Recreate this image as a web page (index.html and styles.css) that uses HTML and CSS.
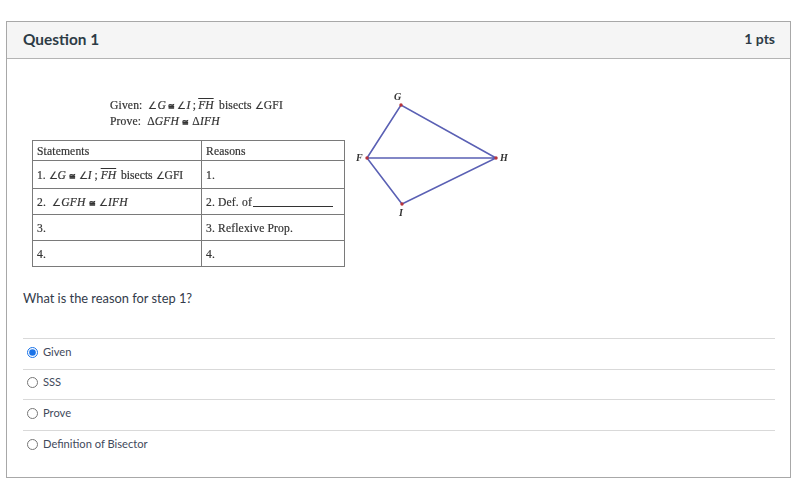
FILE: index.html
```html
<!DOCTYPE html>
<html lang="en">
<head>
<meta charset="utf-8">
<title>Question 1</title>
<link rel="stylesheet" href="styles.css">
</head>
<body>
<section class="card">
  <header class="card-head">
    <h2 class="title">Question 1</h2>
    <span class="pts">1 pts</span>
  </header>
  <div class="card-body">
    <div class="figure">
      <div class="proof">
        <div class="given">
          <div class="given-row"><span class="given-label">Given:</span><span class="given-claim"><i><span class="ang">∠</span>G</i> <b class="cong">≅</b> <i><span class="ang">∠</span>I</i> ; <i class="over">FH</i> <span class="given-tail">bisects <span class="ang">∠</span>GFI</span></span></div>
          <div class="given-row"><span class="given-label">Prove:</span><span>Δ<i>GFH</i> <b class="cong">≅</b> Δ<i>IFH</i></span></div>
        </div>
        <table class="proof-table">
          <tr class="r-head"><td class="col-a">Statements</td><td>Reasons</td></tr>
          <tr class="r-1"><td class="tight">1. <i><span class="ang">∠</span>G</i> <b class="cong">≅</b> <i><span class="ang">∠</span>I</i> ; <i class="over">FH</i> <span class="tail">bisects <span class="ang">∠</span>GFI</span></td><td>1.</td></tr>
          <tr class="r-2"><td>2. &nbsp;<i><span class="ang">∠</span>GFH</i> <b class="cong">≅</b> <i><span class="ang">∠</span>IFH</i></td><td>2. Def. of<span class="blank"></span></td></tr>
          <tr class="r-3"><td>3.</td><td>3. Reflexive Prop.</td></tr>
          <tr class="r-4"><td>4.</td><td>4.</td></tr>
        </table>
      </div>
      <svg class="diagram" width="170" height="140" viewBox="0 0 170 140" aria-label="Kite diagram FGHI">
        <path class="edges" d="M17 73 L51 20 L146 73 L52 119 Z M17 73 H146"/>
        <g class="dots">
          <circle cx="17" cy="73" r="1.7"/><circle cx="51" cy="20" r="1.7"/><circle cx="146" cy="73" r="1.7"/><circle cx="52" cy="119" r="1.7"/>
        </g>
        <g class="labels">
          <text x="44" y="15">G</text>
          <text x="6" y="76">F</text>
          <text x="150" y="76">H</text>
          <text x="49" y="131">I</text>
        </g>
      </svg>
    </div>
    <p class="prompt">What is the reason for step 1?</p>
    <ul class="answers">
      <li class="answer"><input type="radio" name="q1" class="radio" checked><span class="answer-text">Given</span></li>
      <li class="answer"><input type="radio" name="q1" class="radio"><span class="answer-text">SSS</span></li>
      <li class="answer"><input type="radio" name="q1" class="radio"><span class="answer-text">Prove</span></li>
      <li class="answer"><input type="radio" name="q1" class="radio"><span class="answer-text">Definition of Bisector</span></li>
    </ul>
  </div>
</section>
</body>
</html>
```
FILE: styles.css
```css
* { box-sizing: border-box; }
html, body { margin: 0; background: #fff; }
body { padding: 21px 11px 0 6px; font-family: Lato, "Open Sans", sans-serif; color: #2d3b45; }
.card { width: 785px; height: 457px; border: 1px solid #a8a8a8; }
.card-head { height: 37px; display: flex; align-items: center; justify-content: space-between; padding: 0 15px 2px 16px; background: #f5f5f5; border-bottom: 1px solid #b4b4b4; }
.title { margin: 0; font-size: 15.4px; font-weight: 700; color: #2d3b45; }
.pts { margin-bottom: 2px; font-size: 14px; font-weight: 700; }
.card-body { padding: 0 15px 0 16px; }
.figure { display: flex; height: 221px; padding: 9px 0 0 0; }
.proof { width: 322px; padding: 31px 0 0 9px; font-family: "Liberation Serif", serif; font-size: 11.6px; letter-spacing: 0.15px; color: #333; -webkit-text-stroke: 0.2px #333; filter: blur(0.35px); }
.given { height: 29px; padding-left: 78px; line-height: 14.5px; }
.given-row { display: flex; gap: 6px; white-space: nowrap; }
.given-label { display: inline-block; }
.given-claim { letter-spacing: 0; word-spacing: -0.6px; }
.given-tail { margin-left: 3px; letter-spacing: 0.15px; word-spacing: 0; }
.tight { letter-spacing: 0; }
.ang { font-size: 9.5px; font-style: normal; }
.over { text-decoration: overline; }
.tail { margin-left: 2px; }
.cong { font-size: 8px; }
.proof-table { width: 313px; height: 126px; margin-top: 12px; border-collapse: collapse; table-layout: fixed; }
.proof-table td { border: 1px solid #7a7a7a; padding: 1px 4px 0; white-space: nowrap; }
.col-a { width: 169px; }
.r-head { height: 20px; }
.r-1 { height: 28px; }
.r-2, .r-3, .r-4 { height: 26px; }
.blank { display: inline-block; width: 80px; border-bottom: 1px solid #333; margin-left: 1px; position: relative; top: 1px; }
.diagram { display: block; margin: 17px 0 0 5px; flex: none; filter: blur(0.3px); }
.edges { fill: none; stroke: #5a60b4; stroke-width: 1.6; }
.dots circle { fill: #b8343a; }
.labels text { font-family: "Liberation Serif", serif; font-style: italic; font-weight: 700; font-size: 10px; fill: #333; }
.prompt { margin: 0; padding-top: 9px; height: 58px; font-size: 12.85px; line-height: 18px; color: #333b4a; }
.answers { list-style: none; margin: 0; padding: 0; }
.answer { height: 30.67px; display: flex; align-items: center; gap: 5px; padding: 0 0 3px 4px; border-top: 1px solid #d9d9d9; font-size: 11.15px; color: #3f4a5c; }
.answer-text { margin-bottom: 2px; }
.radio { width: 11px; height: 11px; margin: 0; accent-color: #1a73e8; }
```
